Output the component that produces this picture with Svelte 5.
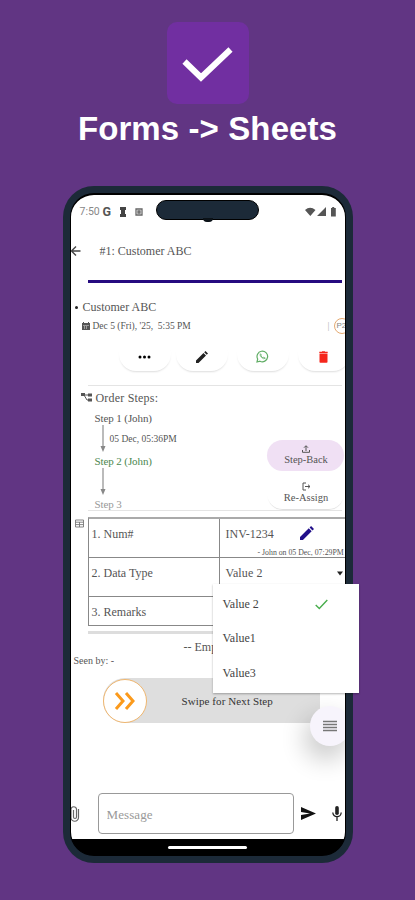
<script>
  const steps = [
    { label: 'Step 1 (John)', note: '05 Dec, 05:36PM', state: 'done' },
    { label: 'Step 2 (John)', note: '', state: 'current' },
    { label: 'Step 3', note: '', state: 'pending' }
  ];

  let options = ['Value 2', 'Value1', 'Value3'];
  let selected = $state('Value 2');
  let message = $state('');
</script>

<main>
  <div class="logo">
    <svg viewBox="0 0 82 82" width="82" height="82">
      <path d="M17.500 39.500 L34 55.500 L63.500 27.500" fill="none" stroke="#fff" stroke-width="6" />
    </svg>
  </div>
  <h1>Forms -&gt; Sheets</h1>

  <div class="phone">
    <div class="screen">
      <header class="status">
        <span class="clock">7:50</span>
        <b class="google">G</b>
        <svg class="s-key" width="6" height="10" viewBox="0 0 6 10"><path d="M0 0h6v3H5v4h1v3H0V7h1V3H0z" fill="#444" /></svg>
        <svg class="s-box" width="8" height="8" viewBox="0 0 8 8"><path d="M1 1h6v6H1z M3 3h2v2H3z" fill="none" stroke="#666" stroke-width="1.300" /></svg>
        <svg class="s-net" width="32" height="10" viewBox="0 0 32 10" fill="#555">
          <path d="M0 3 Q5 -1.500 10.500 3 L5.300 9z M21 0v9h-9z" />
          <path d="M26 1h1.200V0h2v1h1.600v8.500H26z" />
        </svg>
        <div class="island"></div>
      </header>

      <div class="appbar">
        <svg width="11" height="12" viewBox="0 0 11 12"><path d="M9.500 6H1 M5 1.500 L.5 6 L5 10.500" fill="none" stroke="#444" stroke-width="1.400" /></svg>
        <span>#1: Customer ABC</span>
      </div>
      <div class="progress"></div>

      <section class="customer">
        <div class="name"><i></i>Customer ABC</div>
        <div class="date">
          <svg width="8" height="8" viewBox="0 0 8 8"><path d="M0 1h1V0h1v1h4V0h1v1h1v7H0z" fill="#555" /><path d="M1 3.500h6M2.500 4v3M4.500 4v3" stroke="#ccc" stroke-width=".6" /></svg>
          <span>Dec 5 (Fri), '25,&nbsp; 5:35 PM</span>
          <em>|</em>
          <b>P2</b>
        </div>
        <div class="actions">
          <button aria-label="More"><svg width="13" height="4" viewBox="0 0 13 4"><circle cx="2" cy="2" r="1.500" /><circle cx="6.500" cy="2" r="1.500" /><circle cx="11" cy="2" r="1.500" /></svg></button>
          <button aria-label="Edit"><svg width="12" height="12" viewBox="0 0 12 12"><path d="M0 9.500 L7.500 2 L10 4.500 L2.500 12H0z M8.200 1.300 L9.500 0 L12 2.500 L10.700 3.800z" fill="#222" /></svg></button>
          <button aria-label="WhatsApp">
            <svg width="13" height="13" viewBox="0 0 13 13" fill="none" stroke="#60ad65">
              <path d="M1 12 L1.700 9 A5.300 5.300 0 1 1 4 11.200z" stroke-width="1.200" />
              <path d="M4.300 3.700 Q3.500 5 5.300 7.200 Q8 9.800 9.300 8.200 L7.800 7.200 L6.900 7.800 Q5.500 7 5 5.700 L5.500 5z" stroke-width=".8" />
            </svg>
          </button>
          <button aria-label="Delete"><svg width="9" height="12" viewBox="0 0 9 12"><path d="M.5 2.500h8V11q0 .8-.8.800H1.300Q.5 11.800.5 11z M.3.800H3V.300h3v.5h2.700v1.200H.3z" fill="#f5261c" /></svg></button>
        </div>
      </section>

      <section class="steps">
        <div class="title">
          <svg width="11" height="9" viewBox="0 0 11 9"><path d="M0 0h4v3H0z M7 .5h4v3H7z M7 5.500h4v3H7z" fill="#555" /><path d="M3 2h5 M3 2 L6 7h2" fill="none" stroke="#555" /></svg>
          Order Steps:
        </div>
        {#each steps as step, i}
          <div class="step {step.state}">{step.label}</div>
          {#if i < steps.length - 1}
            <div class="link">
              <svg width="8" height="27" viewBox="0 0 8 27"><path d="M4 0v23" stroke="#bbb" stroke-width="2" /><path d="M1.500 21h5L4 27z" fill="#888" /></svg>
              <span>{step.note}</span>
            </div>
          {/if}
        {/each}
        <div class="step-buttons">
          <button class="back">
            <svg width="8" height="8" viewBox="0 0 8 8"><path d="M4 6V1 M2 2.700 L4 .7 L6 2.700 M.5 5v2.300h7V5" fill="none" stroke="#555" /></svg>
            Step-Back
          </button>
          <button class="assign">
            <svg width="9" height="9" viewBox="0 0 9 9"><path d="M4 1H1v7h3 M3 4.500h5 M6 2.700 L8 4.500 L6 6.300" fill="none" stroke="#555" /></svg>
            Re-Assign
          </button>
        </div>
      </section>

      <section class="form">
        <svg class="grid-icon" width="9" height="9" viewBox="0 0 9 9"><path d="M.5 1h8v7h-8z M.5 3.200h8 M.5 5.600h8 M4.500 3v5" fill="none" stroke="#777" stroke-width=".9" /></svg>
        <div class="table">
          <div class="cell">1. Num#</div>
          <div class="cell value num">
            INV-1234
            <svg width="14" height="14" viewBox="0 0 12 12"><path d="M0 9.500 L7.500 2 L10 4.500 L2.500 12H0z M8.200 1.300 L9.500 0 L12 2.500 L10.700 3.800z" fill="#22108a" /></svg>
            <small>- John on 05 Dec, 07:29PM</small>
          </div>
          <div class="cell">2. Data Type</div>
          <div class="cell value select">
            <span>{selected}</span>
            <svg width="6" height="5" viewBox="0 0 6 5"><path d="M0 .5h6L3 4.500z" fill="#222" /></svg>
          </div>
          <div class="cell">3. Remarks</div>
          <div class="cell value"></div>
        </div>
      </section>

      <div class="empty">-- Empty --</div>
      <div class="seen">Seen by: -</div>

      <div class="swipe">
        <div class="knob">
          <svg width="22" height="18" viewBox="0 0 22 18"><path d="M2 1 L9 9 L2 17 M12 1 L19 9 L12 17" fill="none" stroke="#fb9a1c" stroke-width="3" /></svg>
        </div>
        <span>Swipe for Next Step</span>
      </div>

      <button class="fab" aria-label="Menu">
        <svg width="14" height="12" viewBox="0 0 14 12"><path d="M0 1.500h14M0 4.500h14M0 7.500h14M0 10.500h14" stroke="#777" stroke-width="1.500" /></svg>
      </button>

      <footer>
        <svg class="clip" width="12" height="17" viewBox="0 0 12 17"><path d="M9.500 4v8.500a3.700 3.700 0 0 1-7.500 0V4a2.800 2.800 0 0 1 5.500 0v8a1.500 1.500 0 0 1-3 0V5" fill="none" stroke="#666" stroke-width="1.200" /></svg>
        <input bind:value={message} placeholder="Message" />
        <svg class="send" width="15" height="13" viewBox="0 0 15 13"><path d="M0 0 L15 6.500 L0 13V8L9 6.500L0 5z" fill="#111" /></svg>
        <svg class="mic" width="10" height="15" viewBox="0 0 10 15"><rect x="3.200" y="0" width="3.600" height="9" rx="1.800" fill="#222" /><path d="M.8 6.500a4.200 4.200 0 0 0 8.400 0 M5 11v4" fill="none" stroke="#222" stroke-width="1.300" /></svg>
      </footer>
      <div class="nav"><span></span></div>
    </div>

    <div class="menu">
      {#each options as option}
        <button onclick={() => (selected = option)}>
          {option}
          {#if option === selected}
            <svg width="13" height="11" viewBox="0 0 13 11"><path d="M.7 6 L4.300 9.500 L12.300 1" fill="none" stroke="#48ad4c" stroke-width="1.400" /></svg>
          {/if}
        </button>
      {/each}
    </div>
  </div>
</main>

<style>
  :global(body) {
    margin: 0;
    background: #613583;
  }

  main {
    height: 900px;
    overflow: hidden;
    display: flex;
    flex-direction: column;
    align-items: center;
    box-sizing: border-box;
    padding-top: 22px;
    background: #613583;
  }

  svg {
    display: block;
    flex: none;
  }

  button {
    border: 0;
    padding: 0;
    font: inherit;
    color: inherit;
    background: none;
  }

  .logo {
    width: 82px;
    height: 82px;
    border-radius: 10px;
    background: #712fa1;
  }

  h1 {
    margin: 5px 0 0;
    height: 40px;
    font: bold 33px/40px 'Liberation Sans', Arial, sans-serif;
    letter-spacing: 0.1px;
    color: #fff;
    white-space: nowrap;
  }

  .phone {
    position: relative;
    box-sizing: border-box;
    width: 290px;
    height: 677px;
    margin-top: 37px;
    padding: 7px;
    border-radius: 31px;
    background: #1c2a38;
  }

  .screen {
    position: relative;
    box-sizing: border-box;
    width: 276px;
    height: 663px;
    border: 1px solid #000;
    border-top-width: 2px;
    border-radius: 24px;
    overflow: hidden;
    background: linear-gradient(#fff 644px, #000 644px);
    color: #555;
    font: 12px/16px 'Liberation Serif', 'Times New Roman', serif;
    white-space: nowrap;
  }

  .status {
    position: relative;
    display: flex;
    align-items: center;
    height: 34px;
    padding-left: 9px;
    font-family: Roboto, sans-serif;
    font-size: 11px;
  }

  .clock {
    width: 20px;
    color: #888;
    font-size: 10.500px;
  }

  .google {
    margin-left: 3px;
    width: 17px;
    font-size: 12.500px;
  }

  .s-box {
    margin-left: 9px;
  }

  .s-net {
    margin-left: auto;
    margin-right: 8px;
  }

  .island {
    position: absolute;
    left: 85px;
    top: 5px;
    width: 103px;
    height: 20px;
    box-sizing: border-box;
    border: 1px solid #000;
    border-radius: 10px;
    background: #1c2a38;
  }

  .island::after {
    content: '';
    position: absolute;
    left: 46px;
    top: 17px;
    width: 10px;
    height: 4px;
    border-radius: 0 0 6px 6px;
    background: #0b1218;
  }

  .appbar {
    display: flex;
    align-items: center;
    height: 43px;
    gap: 18px;
  }

  .progress {
    margin: 8px 3px 0 17px;
    height: 3px;
    background: #260b80;
  }

  .name {
    display: flex;
    align-items: center;
    margin-top: 16px;
    height: 16px;
  }

  .name i {
    width: 3px;
    height: 3px;
    margin: 0 5px 0 4px;
    border-radius: 50%;
    background: #222;
  }

  .date {
    display: flex;
    align-items: center;
    height: 21px;
    padding-left: 11px;
    font-size: 9.500px;
  }

  .date span {
    margin-left: 3px;
  }

  .date em {
    margin-left: auto;
    font-style: normal;
    color: #aaa;
  }

  .date b {
    box-sizing: border-box;
    width: 16px;
    height: 16px;
    margin: 0 -5px 0 4px;
    border: 1px solid #e5a970;
    border-radius: 50%;
    padding-left: 2px;
    font: 8px/14px 'Liberation Sans', sans-serif;
    color: #888;
  }

  .actions {
    display: flex;
    gap: 9px;
    height: 36px;
    margin-top: 1px;
    padding-left: 48px;
  }

  .actions button {
    flex: none;
    display: flex;
    align-items: center;
    justify-content: center;
    box-sizing: border-box;
    width: 52px;
    height: 34px;
    padding-top: 5px;
    border-radius: 17px;
    box-shadow: 0 2px 2px -1px #ddd;
  }

  .actions button:first-child {
    margin-right: -4px;
  }

  .steps {
    position: relative;
    height: 126px;
    margin: 12px 3px 0 17px;
    border-top: 1px solid #e4e4e4;
    border-bottom: 1px solid #e4e4e4;
    box-sizing: border-box;
  }

  .title {
    display: flex;
    align-items: center;
    gap: 4px;
    height: 23px;
    margin-left: -7px;
    letter-spacing: 0.2px;
  }

  .step {
    height: 16px;
    margin-left: 7px;
    font-size: 11px;
    line-height: 18px;
    letter-spacing: -0.1px;
  }

  .step.current {
    color: #4c8750;
  }

  .step.pending {
    color: #999;
  }

  .link {
    display: flex;
    align-items: center;
    height: 27px;
    padding-left: 11px;
    font-size: 9.500px;
  }

  .link span {
    margin-left: 3px;
  }

  .step-buttons {
    position: absolute;
    right: -2px;
    top: 54px;
    width: 77px;
  }

  .step-buttons button {
    display: flex;
    flex-direction: column;
    align-items: center;
    gap: 1px;
    box-sizing: border-box;
    width: 77px;
    height: 31px;
    padding: 5px 0 0 2px;
    border-radius: 16px;
    font-size: 10.500px;
    line-height: 12px;
  }

  .back {
    background: #f0e0f4;
  }

  .step-buttons .assign {
    margin-top: 7px;
    padding-top: 4px;
    box-shadow: 0 2px 1px -1px #ddd;
  }

  .form {
    position: relative;
    margin: 6px 0 0 17px;
    height: 117px;
    border-bottom: 3px solid #ddd;
    box-sizing: border-box;
  }

  .grid-icon {
    position: absolute;
    left: -13px;
    top: 2px;
  }

  .table {
    display: grid;
    grid-template-columns: 130px 1fr;
    grid-template-rows: 39px 39px 29px;
    border-top: 2px solid #aaa;
    border-left: 1px solid #888;
  }

  .cell {
    box-sizing: border-box;
    border-bottom: 1px solid #888;
    padding: 7px 0 0 3px;
  }

  .value {
    border-left: 1px solid #888;
    padding-left: 6px;
  }

  .num {
    position: relative;
  }

  .num svg {
    position: absolute;
    left: 80px;
    top: 7px;
  }

  .num small {
    position: absolute;
    left: 38px;
    top: 27px;
    font-size: 7.800px;
    line-height: 13px;
  }

  .select {
    display: flex;
    justify-content: space-between;
    padding-right: 2px;
    letter-spacing: 0.1px;
  }

  .select svg {
    margin-top: 6px;
  }

  .empty {
    margin: 5px 0 0 113px;
  }

  .seen {
    margin-left: 3px;
    font-size: 10px;
    line-height: 12px;
  }

  .swipe {
    display: flex;
    align-items: center;
    width: 217px;
    height: 45px;
    margin: 11px 0 0 32px;
    border-radius: 22px 10px 10px 22px;
    background: #dedede;
    color: #333;
    font-size: 11px;
    letter-spacing: 0.1px;
  }

  .knob {
    box-sizing: border-box;
    width: 44px;
    height: 44px;
    margin-right: 35px;
    display: flex;
    align-items: center;
    justify-content: center;
    border: 1px solid #efb66f;
    border-radius: 50%;
    background: #fff;
  }

  .fab {
    position: absolute;
    left: 239px;
    top: 511px;
    width: 40px;
    height: 40px;
    padding-left: 13px;
    border-radius: 50%;
    background: #f7f4fc;
    box-shadow: -4px 12px 24px 2px rgba(0, 0, 0, 0.2);
  }

  footer {
    display: flex;
    align-items: center;
    height: 41px;
    margin-top: 70px;
  }

  .clip {
    margin-left: -2px;
  }

  footer input {
    box-sizing: border-box;
    width: 196px;
    height: 41px;
    margin-left: 17px;
    padding: 2px 8px 0;
    border: 1px solid #999;
    border-radius: 4px;
    outline: 0;
    font: 13px 'Liberation Serif', serif;
    letter-spacing: 0.1px;
  }

  footer input::placeholder {
    color: #999;
  }

  .send {
    margin-left: 7px;
  }

  .mic {
    margin-left: 16px;
  }

  .nav {
    position: absolute;
    inset: auto 0 0;
    height: 16px;
    background: #000;
  }

  .nav span {
    display: block;
    width: 79px;
    height: 3px;
    margin: 7px auto 0;
    border-radius: 2px;
    background: #fff;
  }

  .menu {
    position: absolute;
    left: 150px;
    top: 398px;
    width: 146px;
    height: 109px;
    box-sizing: border-box;
    padding-top: 3px;
    background: #fff;
    box-shadow: 0 1px 2px rgba(0, 0, 0, 0.3);
    font: 12px 'Liberation Serif', serif;
    color: #444;
  }

  .menu button {
    display: flex;
    align-items: center;
    justify-content: space-between;
    width: 100%;
    height: 34.500px;
    padding: 0 31px 0 10px;
  }
</style>
